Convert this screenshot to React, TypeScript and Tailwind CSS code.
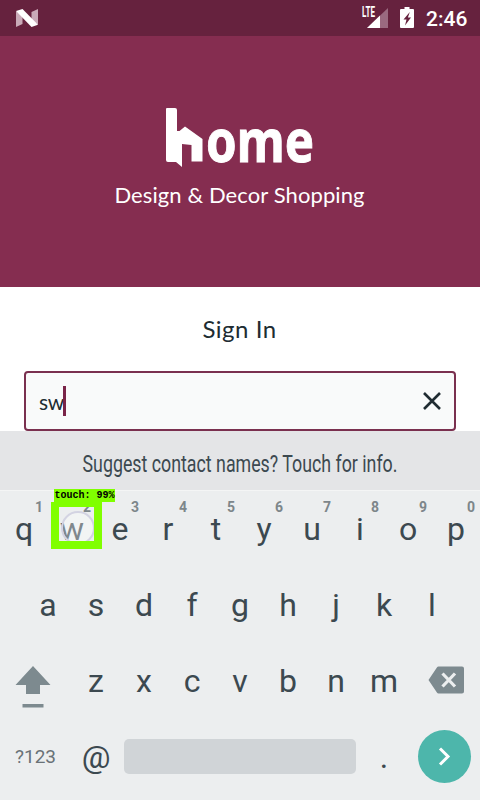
import type { ReactNode } from "react";

function StatusBar() {
  return (
    <div className="flex h-9 items-center bg-[#66223e] pl-4 pr-3 text-white">
      <svg className="h-[18px] w-[22px]" viewBox="0 0 22 18" aria-label="Android">
        <path d="M0 2.2 6.5 6v9L0 18zM15.500 3 22 0v15.500L15.500 12z" fill="#c9aab8" />
        <path d="M0 2 6.500 0 22 15.800 15.500 18z" fill="#fff" />
      </svg>
      <svg className="ml-auto h-[22px] w-[27px] overflow-visible" viewBox="0 0 27 22" aria-label="LTE signal">
        <path d="M27 1v20H6z" fill="#9a6a80" />
        <path d="M19 8.600V21H6z" fill="#fff" />
        <text x="1" y="10" textLength="13" lengthAdjust="spacingAndGlyphs" fill="#fff" stroke="#66223e" strokeWidth="1.500" paintOrder="stroke" className="font-['Roboto'] text-[14px] font-bold">LTE</text>
      </svg>
      <svg className="ml-3 h-[22px] w-[14px]" viewBox="0 0 14 22" aria-label="Battery charging">
        <path d="M4.500 0h5v2H13q1 0 1 1v17q0 1-1 1H1q-1 0-1-1V3q0-1 1-1h3.500z" fill="#fff" />
        <path d="M9.800 5 3.500 12.500h3L5 18.500 11 10.500H7.900z" fill="#66223e" />
      </svg>
      <span className="ml-3 w-[42px] whitespace-nowrap pt-px font-['Roboto',sans-serif] text-[21px] font-medium leading-9">2:46</span>
    </div>
  );
}

function Hero() {
  return (
    <header className="flex h-[251px] flex-col items-center bg-[#852d50] pt-[71px] text-white">
      <svg className="h-[62px] w-[150px] overflow-visible" viewBox="0 0 150 62" aria-label="home">
        <path d="M2 1h8q2 0 2 2v21h2.500L20 19.500 37.500 32V54.500H26.500V38l-9.500-1v23L11 55H3q-2 0-2-2V2q0-1 1-1z" fill="#fff" />
        <text x="41" y="54.500" textLength="108" lengthAdjust="spacingAndGlyphs" fill="#fff" stroke="#fff" strokeWidth="1" className="font-['Noto_Sans'] text-[60px] font-bold leading-none">ome</text>
      </svg>
      <p className="mt-3 whitespace-nowrap pr-px font-['Lato',sans-serif] text-[22px] leading-[28px] tracking-[0.1px]">Design &amp; Decor Shopping</p>
    </header>
  );
}

function SignIn() {
  return (
    <main className="flex h-[144px] flex-col bg-white px-6 pt-[27px] text-[#202c32]">
      <h1 className="pr-px text-center font-['Lato',sans-serif] text-[24px] leading-[30px] tracking-[0.5px]">Sign In</h1>
      <div className="mt-[27px] flex h-[60px] shrink-0 items-center rounded-[4px] border-2 border-[#7a304f] bg-[#f9fafa] pl-[13px] pr-3">
        <span className="w-6 whitespace-nowrap pt-[2px] font-['Lato',sans-serif] text-[21px] leading-[30px] tracking-[-0.3px]">sw</span>
        <span className="h-[30px] w-[3px] bg-[#7a2448]" />
        <svg className="ml-auto h-5 w-5" viewBox="0 0 20 20" aria-label="Clear">
          <path d="m2 2 16 16M18 2 2 18" stroke="#202c32" strokeWidth="2.600" fill="none" />
        </svg>
      </div>
    </main>
  );
}

function Key({ label, hint, children }: { label: string; hint?: string; children?: ReactNode }) {
  return (
    <div className="relative flex h-[76px] w-12 shrink-0 items-center justify-center">
      <span>{label}</span>
      {hint && <span className="absolute right-[5px] top-[8px] text-[14px] font-bold leading-4 text-[#7d868a]">{hint}</span>}
      {children}
    </div>
  );
}

function TouchMarker() {
  return (
    <>
      <span className="absolute left-[13px] top-[20px] h-[34px] w-[34px] rounded-full border-2 border-[#d3d3e2] bg-white/35" />
      <span className="absolute left-[3px] top-[11px] h-[47px] w-[51px] border-8 border-[#80ff00] border-t-[5px]" />
      <span className="absolute left-[6px] top-[-2px] flex h-[13px] w-[61px] items-center justify-center whitespace-nowrap bg-[#80ff00] font-['Liberation_Mono',monospace] text-[10px] font-bold leading-[13px] text-black">touch: 99%</span>
    </>
  );
}

function Keyboard() {
  return (
    <section className="flex h-[369px] flex-col bg-[#eceeef] font-['Roboto',sans-serif] text-[32px] leading-[38px] text-[#3c4950]">
      <div className="flex h-[60px] shrink-0 items-center justify-center border-b border-[#f4f5f5] bg-[#e4e5e7] pt-[7px]">
        <span className="scale-x-[0.757] whitespace-nowrap text-[23.500px] leading-[30px]">Suggest contact names? Touch for info.</span>
      </div>
      <div className="flex">
        {[..."qwertyuiop"].map((letter, i) => (
          <Key key={letter} label={letter} hint={String((i + 1) % 10)}>
            {letter === "w" && <TouchMarker />}
          </Key>
        ))}
      </div>
      <div className="flex justify-center">
        {[..."asdfghjkl"].map((letter) => <Key key={letter} label={letter} />)}
      </div>
      <div className="flex">
        <div className="flex w-[72px] justify-start pl-[15px] pt-[23px]">
          <svg className="h-[42px] w-9" viewBox="0 0 36 42" aria-label="Shift">
            <path d="M18 0 35.500 19H25v9H11v-9H.5zM7.500 38h21v3.500h-21z" fill="#7d8a8f" />
          </svg>
        </div>
        {[..."zxcvbnm"].map((letter) => <Key key={letter} label={letter} />)}
        <div className="flex flex-1 items-start pl-5 pt-[23px]">
          <svg className="h-7 w-9" viewBox="0 0 36 28" aria-label="Delete">
            <path d="M10.500.5H34q2 0 2 2v23q0 2-2 2H10.500q-1 0-1.600-1L.5 14 8.900 1.500q.6-1 1.600-1z" fill="#7d8a8f" />
            <path d="m14.500 7.500 12.500 13m0-13-12.500 13" stroke="#eceeef" strokeWidth="3.200" />
          </svg>
        </div>
      </div>
      <div className="flex h-[75px] items-center">
        <span className="w-[71px] text-center text-[19px] text-[#697277]">?123</span>
        <span className="ml-px w-12 pt-px text-center">@</span>
        <span className="ml-1 h-[35px] w-[232px] rounded-[5px] bg-[#d0d4d7]" />
        <span className="ml-1 w-12 text-center">.</span>
        <span className="ml-[10px] flex h-[53px] w-[53px] items-center justify-center rounded-full bg-[#4db6ab]">
          <svg className="h-5 w-5" viewBox="0 0 20 20" aria-label="Next">
            <path d="m5 1.500 8 8-8 8" stroke="#fff" strokeWidth="3" fill="none" />
          </svg>
        </span>
      </div>
    </section>
  );
}

export default function App() {
  return (
    <div className="h-[800px] w-[480px] overflow-hidden bg-white">
      <StatusBar />
      <Hero />
      <SignIn />
      <Keyboard />
    </div>
  );
}
